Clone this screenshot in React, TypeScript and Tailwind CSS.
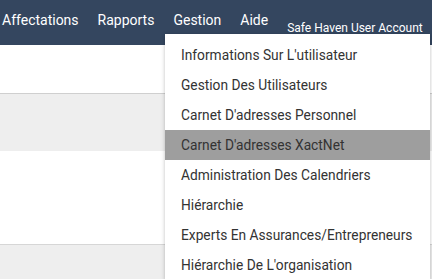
const navItems = ["Affectations", "Rapports", "Gestion", "Aide"];

const menuItems = [
  "Informations Sur L'utilisateur",
  "Gestion Des Utilisateurs",
  "Carnet D'adresses Personnel",
  "Carnet D'adresses XactNet",
  "Administration Des Calendriers",
  "Hiérarchie",
  "Experts En Assurances/Entrepreneurs",
  "Hiérarchie De L'organisation",
];

export default function App() {
  return (
    <div className="relative h-[279px] w-[432px] overflow-hidden bg-white font-['Roboto',sans-serif]">
      <header className="flex h-[45px] items-start bg-[#34465f] pl-[2px] text-white">
        {navItems.map((item) => (
          <span key={item} className="mr-[19px] mt-[10px] text-[14px] leading-[20px]">
            {item}
          </span>
        ))}
        <span className="mt-[20px] text-[12px] leading-[16px]">Safe Haven User Account</span>
      </header>

      <div className="h-[48px]" />
      <div className="h-[58px] border-t border-[#cfcfcf] bg-[#eeeeee]" />
      <div className="h-[93px]" />
      <div className="h-[40px] border-t border-[#d6d6d6] bg-[#eeeeee]" />

      <div className="absolute left-[165px] top-[34px] w-[265px] bg-white pt-[6px] shadow-[0_1px_4px_rgba(0,0,0,0.25)]">
        {menuItems.map((item) => (
          <div
            key={item}
            className={
              item === "Carnet D'adresses XactNet"
                ? "flex h-[30px] items-center bg-[#9e9e9e] pl-[16px] text-[13.75px] text-[#333333]"
                : "flex h-[30px] items-center pl-[16px] text-[13.75px] text-[#333333]"
            }
          >
            {item}
          </div>
        ))}
      </div>
    </div>
  );
}
